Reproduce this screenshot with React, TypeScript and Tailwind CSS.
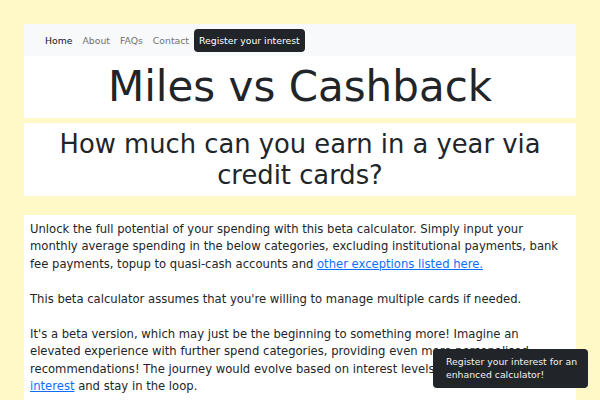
import React from 'react'

// ─────────────────────────────────────────────────────────────────────────────
// Miles vs Cashback landing
// ─────────────────────────────────────────────────────────────────────────────
const navLinks = ['About', 'FAQs', 'Contact']

const Navbar = () => (
  <nav className="flex h-[32px] items-center bg-[#f8f9fa] pl-4 text-[9.3px] leading-[15px]">
    <a className="px-[5px] text-[#141414]">Home</a>
    {navLinks.map((link) => (
      <a key={link} className="px-[5px] text-[#737373]">
        {link}
      </a>
    ))}
    <button className="rounded-[4px] bg-[#212529] px-[5px] py-[4px] text-white">
      Register your interest
    </button>
  </nav>
)

export default function App() {
  return (
    <div className="min-h-screen bg-[#fff8c7] px-6 pt-6 pb-10 font-['DejaVu_Sans',sans-serif] text-[#212529]">
      <div className="bg-white">
        <Navbar />
        <h1 className="py-[6px] text-center text-[42px] leading-[1.2]">
          Miles vs Cashback
        </h1>
      </div>

      <h2 className="mt-[4.5px] bg-white pt-[6px] pb-[5px] text-center text-[25.8px] leading-[1.2]">
        How much can you earn in a year via credit cards?
      </h2>

      <div className="mt-[19px] bg-white px-[6px] pt-[6px] pb-6 text-[11.6px] leading-[17.5px]">
        <p>
          Unlock the full potential of your spending with this beta calculator.
          Simply input your monthly average spending in the below categories,
          excluding institutional payments, bank fee payments, topup to
          quasi-cash accounts and{' '}
          <a className="text-[#0d6efd] underline">other exceptions listed here.</a>
          <br />
          <br />
          This beta calculator assumes that you're willing to manage multiple
          cards if needed.
          <br />
          <br />
          It's a beta version, which may just be the beginning to something
          more! Imagine an elevated experience with further spend categories,
          providing even more personalised recommendations! The journey would
          evolve based on interest levels. Do register your{' '}
          <a className="text-[#0d6efd] underline">interest</a> and stay in the
          loop.
        </p>
      </div>

      <div className="fixed right-[12px] bottom-[12px] w-[155px] rounded-[4px] bg-[#212529] py-[7px] pl-[13px] pr-[8px] text-[9.3px] leading-[12.5px] text-[#f2f2f2]">
        Register your interest for an enhanced calculator!
      </div>
    </div>
  )
}
